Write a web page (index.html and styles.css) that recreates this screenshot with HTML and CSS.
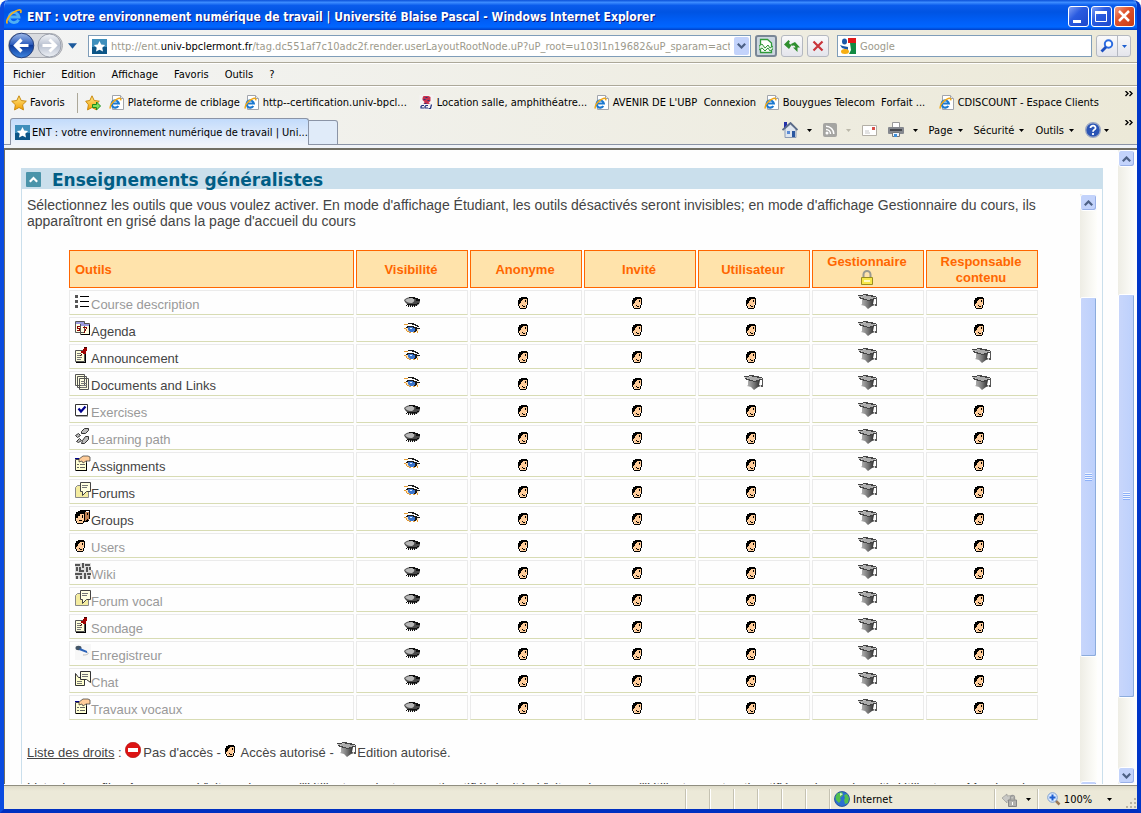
FILE: index.html
```
<!DOCTYPE html>
<html lang="fr">
<head>
    <meta charset="UTF-8">
    <meta name="viewport" content="width=device-width, initial-scale=1.0">
    <title>ENT : votre environnement numérique de travail | Université Blaise Pascal</title>
    <link rel="stylesheet" href="styles.css">
</head>

<body>
    <!-- icon sheet -->
    <svg class="sprites" aria-hidden="true">
        <defs>
            <linearGradient id="gBlue" x1="0" y1="0" x2="0" y2="1">
                <stop offset="0" stop-color="#9db8e8"/><stop offset=".45" stop-color="#2f5fbe"/><stop offset=".5" stop-color="#0d3a9c"/><stop offset="1" stop-color="#3f86e0"/>
            </linearGradient>
            <linearGradient id="gGrey" x1="0" y1="0" x2="0" y2="1">
                <stop offset="0" stop-color="#f4f6fa"/><stop offset=".5" stop-color="#b9c1d0"/><stop offset="1" stop-color="#eef1f6"/>
            </linearGradient>
            <linearGradient id="gStar" x1="0" y1="0" x2="0" y2="1">
                <stop offset="0" stop-color="#ffe98a"/><stop offset="1" stop-color="#f5a000"/>
            </linearGradient>
            <linearGradient id="gCap" x1="0" y1="0" x2="1" y2="0">
                <stop offset="0" stop-color="#b5b5b5"/><stop offset=".5" stop-color="#777"/><stop offset="1" stop-color="#222"/>
            </linearGradient>
        </defs>
        <symbol id="ie" viewBox="0 0 16 16">
            <path d="M12.600 10.600A5 5 0 1 1 13 8H4.500" fill="none" stroke="#4fb0f4" stroke-width="2.800"/>
            <path d="M1.500 14.500C-1 12 4 5 9 2.500s7-2 5.500 1.500" fill="none" stroke="#f2b01e" stroke-width="1.700"/>
        </symbol>
        <symbol id="iepage" viewBox="0 0 16 16">
            <path d="M3.500.500h8l3 3v11h-11z" fill="#fff" stroke="#a0a4ac"/>
            <path d="M11.500.500v3h3" fill="#e4e6ea" stroke="#a0a4ac"/>
            <path d="M9.300 11A3.600 3.600 0 1 1 9.800 8.500H3" fill="none" stroke="#1a78d0" stroke-width="2.200"/>
            <path d="M1.500 13.500C0 11 4 6 7.500 4.300s5-1 4 1" fill="none" stroke="#f0a818" stroke-width="1.500"/>
        </symbol>
        <symbol id="site" viewBox="0 0 15 15">
            <path d="M0 0h15v15H0z" fill="#3f8fbc"/><path d="M0 8h15v7H0z" fill="#0d5687"/>
            <path d="M7.500 2l1.700 3.500 3.900.500-2.800 2.700.700 3.800-3.500-1.800L4 12.500l.700-3.800L1.900 6l3.900-.500z" fill="#fff"/>
        </symbol>
        <symbol id="star" viewBox="0 0 16 16">
            <path d="M8 .800l2.200 4.700 5.100.700-3.700 3.600.900 5.100L8 12.500l-4.500 2.400.900-5.100L.700 6.200l5.100-.700z" fill="url(#gStar)" stroke="#c98a10"/>
        </symbol>
        <symbol id="staradd" viewBox="0 0 16 16">
            <path d="M7 .800l2.200 4.700 5.100.700-3.700 3.600.900 5.100L7 12.500l-4.500 2.400.900-5.100L.700 6.200l4.100-.700z" fill="url(#gStar)" stroke="#c98a10"/>
            <path d="M7.500 9.500h4V7l4 4-4 4v-2.500h-4z" fill="#7de05a" stroke="#1d8a1d"/>
        </symbol>
        <symbol id="cci" viewBox="0 0 14 15">
            <path d="M0 0h14v15H0z" fill="#f5f3f3"/>
            <path d="M4 1h5l2 1v4L9 8l2 1H4l1-2-2-2V3z" fill="#c8324e"/><path d="M6 2h2v1H6zM4 4h2v1H4zM8 5h2v1H8zM5 8h2v1H5z" fill="#29377c"/>
            <path d="M4.500 10.500h-2l-1 1v1.500h3M8.500 10.500h-2l-1 1v1.500h3M12 9.500l-1 4H9" fill="none" stroke="#1f2f7c" stroke-width="1.200"/>
        </symbol>
        <symbol id="nav" viewBox="0 0 56 28">
            <rect x=".5" y="1.500" width="54" height="24" rx="12" fill="#d9dbdf" stroke="#a8aab0"/>
            <circle cx="13.500" cy="13.500" r="12.300" fill="url(#gBlue)" stroke="#27407c"/>
            <circle cx="41.500" cy="13.500" r="11.500" fill="url(#gGrey)" stroke="#9aa0ac"/>
            <path d="M20.500 13.500H8M13.500 7.500l-6 6 6 6" fill="none" stroke="#fff" stroke-width="3.200"/>
            <path d="M34.500 13.500H47M41.500 7.500l6 6-6 6" fill="none" stroke="#fff" stroke-width="3"/>
        </symbol>
        <symbol id="compat" viewBox="0 0 14 16">
            <path d="M1.500 1.500h7l4 3.500v9.500h-11z" fill="#fff" stroke="#2f9a3a" stroke-width="1.300"/>
            <path d="M0 8l3-2 3 4 3-3 2 3 3-2v3l-3 2-2-3-3 3-3-3-3 2z" fill="#e8f4e8" stroke="#2f9a3a"/>
        </symbol>
        <symbol id="refresh" viewBox="0 0 16 14">
            <path d="M0 5.500L4.500 1 6 2.500C4.500 4 5 5.500 8 5.500L5 10 0 5.500z" fill="#2f8f2f"/>
            <path d="M7 5l4-2 5 5.500h-2.500V13L9 8.500h2.500C11 7 10 6 8 7z" fill="#2f8f2f"/>
        </symbol>
        <symbol id="stop" viewBox="0 0 12 12">
            <path d="M1.500 1.500l9 9M10.500 1.500l-9 9" stroke="#c9353b" stroke-width="2.200"/>
        </symbol>
        <symbol id="goog" viewBox="0 0 16 16">
            <path d="M0 0h16v16H0z" fill="#fff"/><path d="M8 0h8v5H8z" fill="#e01818"/><path d="M10 5h6v11H9l2-4z" fill="#118a42"/>
            <ellipse cx="4.500" cy="3.500" rx="2.500" ry="3" fill="#1c57a8"/><path d="M0 7l3 1 5 1v3L2 10z" fill="#1c57a8"/>
            <ellipse cx="5" cy="13.500" rx="4" ry="2.500" fill="#f6ae12"/>
        </symbol>
        <symbol id="loupe" viewBox="0 0 14 14">
            <circle cx="8.500" cy="5" r="3.700" fill="#fff" stroke="#2b6be0" stroke-width="2"/><path d="M6 8l-4.500 4.500" stroke="#1d4fc0" stroke-width="2.800"/>
        </symbol>
        <symbol id="home" viewBox="0 0 16 16">
            <path d="M3 7v8.500h11V7L8.500 2z" fill="#dfe6ee" stroke="#8c9bb4"/>
            <path d="M.500 8L8.500 1l7 7" fill="none" stroke="#5a6b88" stroke-width="1.800"/>
            <path d="M2 0h3v3L2 6z" fill="#2331a8"/><path d="M5 9h3v3H5z" fill="#5b8bd4"/><path d="M10 9h3v6h-3z" fill="#2a57a0"/>
        </symbol>
        <symbol id="rss" viewBox="0 0 14 14">
            <rect width="14" height="14" rx="2" fill="#a5a5a2"/><circle cx="4" cy="10" r="1.500" fill="#fff"/>
            <path d="M3 6.500a4.500 4.500 0 0 1 4.500 4.500M3 3.200a7.800 7.800 0 0 1 7.800 7.800" fill="none" stroke="#fff" stroke-width="1.500"/>
        </symbol>
        <symbol id="mail" viewBox="0 0 15 11">
            <path d="M.500.500h14v10H.500z" fill="#fff" stroke="#b3afa6"/><path d="M3 6h4M3 8h5" stroke="#c6c6c6"/><path d="M10 2h3v3h-3z" fill="#d8504a"/>
        </symbol>
        <symbol id="print" viewBox="0 0 16 16">
            <path d="M4.500.500h7v6h-7z" fill="#fff" stroke="#999"/><rect x="0" y="5" width="16" height="7" rx="1" fill="#85888e"/>
            <path d="M2 7h12v2H2z" fill="#46484e"/><path d="M4.500 10.500h7v4h-7z" fill="#eef5ff" stroke="#777"/><path d="M6 12h3v3H6z" fill="#3e8fd8"/>
        </symbol>
        <symbol id="help" viewBox="0 0 16 16">
            <circle cx="8" cy="8" r="7.300" fill="#2b55b5" stroke="#9aa7c4" stroke-width="1.400"/>
            <path d="M5.500 6C5.500 2.800 11 3 10.500 6.200 10.200 7.700 8 7.800 8 9.800M8 11v2" fill="none" stroke="#fff" stroke-width="1.800"/>
        </symbol>
        <symbol id="caret" viewBox="0 0 5 3"><path d="M0 0h5L2.500 3z" fill="currentColor"/></symbol>
        <symbol id="more" viewBox="0 0 8 6"><path d="M.500 0l2.500 2.500L.500 5M4.500 0L7 2.500 4.500 5" fill="none" stroke="#000" stroke-width="1.400"/></symbol>
        <symbol id="chevup" viewBox="0 0 9 6"><path d="M.800 5.200L4.500 1.500l3.700 3.700" fill="none" stroke="currentColor" stroke-width="2.200"/></symbol>
        <symbol id="chevdown" viewBox="0 0 9 6"><path d="M.800.800l3.700 3.700L8.200.800" fill="none" stroke="currentColor" stroke-width="2.200"/></symbol>
        <symbol id="globe" viewBox="0 0 16 16">
            <circle cx="8" cy="8" r="7.500" fill="#2c6fd0" stroke="#1d4a90" stroke-width=".8"/>
            <path d="M3 2.500L8 1l1 3-3 3 1 2-2 3-3-3-.500-3zM10 4l3-1 2 4-1 5-3 1-1-4 1-2z" fill="#52c04e"/><path d="M6 2l3 1-3 2z" fill="#d7f3d2"/>
        </symbol>
        <symbol id="secure" viewBox="0 0 16 15">
            <path d="M0 6l5-4v2c5-1 7 1 7 3H8L5 9v2z" fill="#c9c9c6" stroke="#9b9b98" stroke-width=".7"/>
            <path d="M6.500 8h8v6.500h-8z" fill="#b1b1ae" stroke="#888"/><path d="M8.500 8V5.500a2 2 0 0 1 4 0V8" fill="none" stroke="#999" stroke-width="1.300"/><path d="M10 10h1v3h-1z" fill="#fff"/>
        </symbol>
        <symbol id="zoom" viewBox="0 0 14 14">
            <path d="M8.500 8.500l4 4" stroke="#9b7a5a" stroke-width="2.500"/><circle cx="5.500" cy="5.500" r="4.800" fill="#dbeaff" stroke="#7d9fcf"/>
            <path d="M5.500 2.500v6M2.500 5.500h6" stroke="#1f5fd0" stroke-width="2"/>
        </symbol>

        <!-- course tool icons -->
        <symbol id="face" viewBox="0 0 16 16">
            <path d="M3 5h6v6H8v4H3l-2-3V8z" fill="#fc9"/>
            <path d="M3 4h6v1H3zM1 5h9v1H1zM1 6h4v1H1zM0 7h4v1H0zM0 8h3v2H0zM0 10h2v1H0zM0 11h1v2H0zM1 13h1v2H1zM2 15h6v1H2zM8 12h1v3H8zM9 6h1v6H9zM7 7h1v2H7zM4 12h1v1H4zM5 13h2v1H5z"/>
        </symbol>
        <symbol id="shut" viewBox="0 0 16 16">
            <path d="M0 7c3-3 8-4 12-2l4 3c0 3-3 5-6 5-4 0-8-1-10-6z" fill="#4a4a4a"/>
            <path d="M1 7c3-2 7-3 9-1 1 2-1 4-3 4-3 0-5-1-6-3z" fill="#b8b8b8"/>
            <path d="M5 4h6v1H5zM9 5h5v1H9zM12 6h4v2h-4zM3 11h10v1H3zM2 12h1v1H2zM4 12h1v2H4zM6 12h1v2H6zM8 12h1v2H8zM10 12h1v2h-1zM12 12h1v1h-1zM13 10h2v1h-2z" fill="#111"/>
        </symbol>
        <symbol id="eye" viewBox="0 0 16 16">
            <path d="M1 9l4-2h7l3 3-2 2H4z" fill="#fbe2bc"/>
            <path d="M4 7h7v4l-2 1H6l-2-2z" fill="#3a74cc"/><path d="M6 8h2v1H6z" fill="#d5e8fb"/>
            <path d="M0 4h4v1H0zM0 8h2v1H0zM2 9h1v2H2zM3 11h2v1H3zM5 12h2v1H5zM9 12h2v1H9zM13 11h1v2h-1z" fill="#e59a30"/>
            <path d="M4 3h6v1H4zM8 4h4v1H8zM11 5h3v1h-3zM13 6h2v1h-2zM3 6h7v1H3zM2 7h2v1H2zM9 7h4v1H9zM11 8h5v1h-5zM11 9h2v2h-2zM10 11h2v1h-2z" fill="#1a1a1a"/>
        </symbol>
        <symbol id="cap" viewBox="0 0 20 16">
            <path d="M4 6h12l-1 5 2 1-3 1-4 3-3-3-4-1 1-1z" fill="url(#gCap)"/>
            <path d="M0 3l9-1 9 2-7 4z" fill="#ababab"/>
            <path d="M5 1h5v1h5v1h3v1h-5V3H8V2H5zM0 2h5v1H0zM1 4h2v1h3v1h3v1h3V6h3V5h3v1h-2v1h-3v1H9V7H5V6H2V5H1z" fill="#444"/>
            <path d="M18 4h1v7h-1zM17 11h2v2h-2z" fill="#555"/>
        </symbol>
        <symbol id="list" viewBox="0 0 16 16">
            <path d="M0 2h3v3H0zM0 7h3v3H0zM0 12h3v3H0z" fill="#555"/><path d="M5 3h9v1H5zM5 8h9v1H5zM5 13h9v1H5z"/>
        </symbol>
        <symbol id="agenda" viewBox="0 0 16 16">
            <path d="M.500 1.500h9v11h-9zM5.500 3.500h9v11h-9z" fill="#ffffe1" stroke="#555"/><path d="M1 2h8v2H1zM6 4h8v2H6z" fill="#9a9ae0"/>
            <path d="M2 6h3v1H3v1h2v3H2v-1h2V9H2zM8 7h4v2h-1v2h-1v2H9v-2h1V9h1V8H8z" fill="#8b0000"/><path d="M14 5h1v10H6v-1h8z"/>
        </symbol>
        <symbol id="note" viewBox="0 0 16 16">
            <path d="M.500 3.500h9v11h-9z" fill="#ffffdc" stroke="#555"/><path d="M10 6v9H1v1h10V6z"/><path d="M2 6h4v1H2zM2 8h5v1H2zM2 10h5v1H2zM2 12h4v1H2z" fill="#777"/>
            <path d="M8 2h1V1h3v3h-1v3H8V6H6V4h2z" fill="#a00000"/><path d="M5 8h1V7h1v1H6v1H5zM9 0h3v1H9z" fill="#400"/>
        </symbol>
        <symbol id="docs" viewBox="0 0 16 16">
            <path d="M.500.500h9v11h-9zM2.500 2.500h9v11h-9zM4.500 4.500h9v11h-9z" fill="#ffffe1" stroke="#555"/><path d="M6 7h4v1H6zM6 9h6v1H6zM6 11h6v1H6zM6 13h6v1H6z" fill="#777"/>
        </symbol>
        <symbol id="check" viewBox="0 0 16 16">
            <path d="M.500 3.500h12v11H.500z" fill="#fff" stroke="#333"/><path d="M3.500 7.500l2.500 3 4.500-5" fill="none" stroke="#00008b" stroke-width="2.200"/><path d="M1 15h12v1H1z" fill="#aaa"/>
        </symbol>
        <symbol id="path" viewBox="0 0 16 16">
            <path d="M6.500 3.500l3-3h4v2l-3 3h-4zM7.500 12.500l3-4h3v3l-4 4h-3zM.500 7.500l3-2 2 2-3 2zM1.500 13.500l3-3 2 2-3 2z" fill="#bbb" stroke="#333"/>
        </symbol>
        <symbol id="work" viewBox="0 0 16 16">
            <path d="M.500 4.500h11v11H.500z" fill="#ffffd4" stroke="#444"/><path d="M2 9h2v1H2zM5 9h5v1H5zM2 12h2v1H2zM5 12h5v1H5z" fill="#666"/>
            <path d="M4 4l4-3h5l2 1v4h-4L8 8 7 6 4 7z" fill="#fc9" stroke="#333" stroke-width=".7"/><path d="M0 3h4v1H0z" fill="#00008b"/><path d="M12 8v8H1v-1h10V8z"/>
        </symbol>
        <symbol id="forum" viewBox="0 0 16 16">
            <path d="M.500 5.500l2-2h5v3h6v9H.500z" fill="#f4eca0" stroke="#888"/><path d="M5.500.500h10v9h-4l-4 4v-4h-2z" fill="#ffffe1" stroke="#444"/><path d="M7 3h6v1H7zM7 5h5v1H7z" fill="#777"/>
        </symbol>
        <symbol id="groups" viewBox="0 0 16 16">
            <path d="M7 3h7v8h-2v2H7z" fill="#c08050"/><path d="M3 4h6v10H3L1 11z" fill="#fc9"/>
            <path d="M5 1h10v1H5zM8 2h3v1H8zM14 2h1v8h-1zM12 4h1v2h-1zM11 11h3v1h-3zM12 10h1v3H9v-1h3zM3 2h6v1H3zM1 3h9v2H1zM0 5h5v2H0zM0 7h3v2H0zM0 9h1v3H0zM1 12h1v2H1zM2 14h6v1H2zM8 12h1v2H8zM9 5h1v7H9zM7 6h1v3H7zM4 11h3v1H4z"/>
        </symbol>
        <symbol id="wiki" viewBox="0 0 16 16">
            <path d="M0 0h16v16H0z" fill="#ddd"/>
            <path d="M0 1h5v2H0zM1 4h2v4H1zM4 4h2v3h3v2H4zM7 0h2v5H7zM10 1h5v2h-5zM11 4h2v5h-2zM14 4h2v3h-2zM0 10h7v2H0zM9 10h2v6H9zM12 10h4v2h-4zM1 13h2v3H1zM5 13h2v3H5zM13 13h2v3h-2z" fill="#555"/>
        </symbol>
        <symbol id="micro" viewBox="0 0 16 16">
            <path d="M0 0h16v16H0z" fill="#f7f7f7"/><ellipse cx="3.500" cy="4" rx="3" ry="2.200" fill="#456"/><path d="M5 4l7 3v2L4 6z" fill="#2a62b8"/><path d="M12 8c2 1 2 3-4 3" fill="none" stroke="#bbb"/>
        </symbol>
        <symbol id="chat" viewBox="0 0 16 16">
            <path d="M.500 2.500l3 4h6v8h-9z" fill="#ffffcf" stroke="#333"/><path d="M5.500.500h10v11l-4-3h-6z" fill="#ffffe1" stroke="#333"/><path d="M7 3h6v1H7zM7 5h6v1H7zM2 10h5v1H2zM2 12h5v1H2z" fill="#777"/>
        </symbol>
        <symbol id="lock" viewBox="0 0 14 16">
            <path d="M3.500 7V4.500a3.500 3.500 0 0 1 7 0V7" fill="none" stroke="#9a9a90" stroke-width="2"/><path d="M1.500 7.500h11v7h-11z" fill="#f7e84a" stroke="#9a8c20"/><path d="M4 10h6v2H4z" fill="#fffbc0"/>
        </symbol>
        <symbol id="denied" viewBox="0 0 16 16">
            <circle cx="8" cy="8" r="7.700" fill="#dc1414" stroke="#b00808" stroke-width=".6"/><path d="M3 6h10v4H3z" fill="#fff"/>
        </symbol>
    </svg>

    <div class="window">
        <header class="titlebar">
            <svg class="ic16"><use href="#ie"/></svg>
            <h1>ENT : votre environnement numérique de travail | Université Blaise Pascal - Windows Internet Explorer</h1>
            <button class="wbtn" aria-label="Réduire"><svg viewBox="0 0 21 21"><path d="M5 14h8v3H5z" fill="#fff"/></svg></button>
            <button class="wbtn" aria-label="Agrandir"><svg viewBox="0 0 21 21"><path d="M4.500 5.500h11v10h-11z" fill="none" stroke="#fff"/><path d="M4 5h12v3H4z" fill="#fff"/></svg></button>
            <button class="wbtn close" aria-label="Fermer"><svg viewBox="0 0 21 21"><path d="M5 5l10 10M15 5L5 15" stroke="#fff" stroke-width="2.500"/></svg></button>
        </header>

        <div class="chrome">
            <div class="navrow">
                <svg class="navbtns"><use href="#nav"/></svg>
                <svg class="navcaret"><use href="#caret"/></svg>
                <div class="address">
                    <svg class="ic15"><use href="#site"/></svg>
                    <div class="url">http://ent.<b>univ-bpclermont.fr</b>/tag.dc551af7c10adc2f.render.userLayoutRootNode.uP?uP_root=u103l1n19682&amp;uP_sparam=activ</div>
                    <button class="drop" aria-label="Historique"><svg class="chev"><use href="#chevdown"/></svg></button>
                </div>
                <button class="tool on" aria-label="Affichage de compatibilité"><svg width="14" height="16"><use href="#compat"/></svg></button>
                <button class="tool" aria-label="Actualiser"><svg width="16" height="14"><use href="#refresh"/></svg></button>
                <button class="tool" aria-label="Arrêter"><svg width="12" height="12"><use href="#stop"/></svg></button>
                <div class="search">
                    <svg class="ic16"><use href="#goog"/></svg>
                    <input type="text" placeholder="Google" aria-label="Recherche">
                </div>
                <div class="searchbtns">
                    <button aria-label="Rechercher"><svg width="14" height="14"><use href="#loupe"/></svg></button>
                    <button class="thin" aria-label="Options de recherche"><svg class="caret"><use href="#caret"/></svg></button>
                </div>
            </div>

            <nav class="menu">
                <a href="#">Fichier</a>
                <a href="#">Edition</a>
                <a href="#">Affichage</a>
                <a href="#">Favoris</a>
                <a href="#">Outils</a>
                <a href="#">?</a>
            </nav>

            <div class="favs">
                <button class="favbtn"><svg class="ic16"><use href="#star"/></svg>Favoris</button>
                <div class="links">
                    <svg class="ic16"><use href="#staradd"/></svg>
                    <a href="#" class="f1"><svg class="ic16"><use href="#iepage"/></svg>Plateforme de criblage</a>
                    <a href="#" class="f2"><svg class="ic16"><use href="#iepage"/></svg>http--certification.univ-bpcl...</a>
                    <a href="#" class="f2"><svg class="ic15"><use href="#cci"/></svg>Location salle, amphithéatre...</a>
                    <a href="#" class="f3"><svg class="ic16"><use href="#iepage"/></svg>AVENIR DE L'UBP</a>
                    <a href="#" class="f4">Connexion</a>
                    <a href="#" class="f2"><svg class="ic16"><use href="#iepage"/></svg>Bouygues Telecom&nbsp; Forfait ...</a>
                    <a href="#"><svg class="ic16"><use href="#iepage"/></svg>CDISCOUNT - Espace Clients</a>
                </div>
                <svg class="more"><use href="#more"/></svg>
            </div>

            <div class="tabrow">
                <a href="#" class="tab"><svg class="ic15"><use href="#site"/></svg>ENT : votre environnement numérique de travail | Uni...</a>
                <button class="newtab" aria-label="Nouvel onglet"></button>
                <div class="commands">
                    <button class="split" aria-label="Accueil"><svg class="ic16"><use href="#home"/></svg><svg class="caret"><use href="#caret"/></svg></button>
                    <button class="split off" aria-label="Flux"><svg width="14" height="14"><use href="#rss"/></svg><svg class="caret"><use href="#caret"/></svg></button>
                    <button aria-label="Courrier"><svg width="15" height="11"><use href="#mail"/></svg></button>
                    <button class="split" aria-label="Imprimer"><svg class="ic16"><use href="#print"/></svg><svg class="caret"><use href="#caret"/></svg></button>
                    <button>Page<svg class="caret"><use href="#caret"/></svg></button>
                    <button>Sécurité<svg class="caret"><use href="#caret"/></svg></button>
                    <button>Outils<svg class="caret"><use href="#caret"/></svg></button>
                    <button class="help" aria-label="Aide"><svg class="ic16"><use href="#help"/></svg><svg class="caret"><use href="#caret"/></svg></button>
                </div>
                <svg class="more"><use href="#more"/></svg>
            </div>
        </div>

        <main class="page">
            <div class="document">
                <section class="portlet">
                    <h2><svg class="fold"><use href="#chevup"/></svg>Enseignements généralistes</h2>
                    <div class="frame">
                        <div class="content">
                            <p class="intro">Sélectionnez les outils que vous voulez activer. En mode d'affichage Étudiant, les outils désactivés seront invisibles; en mode d'affichage Gestionnaire du cours, ils apparaîtront en grisé dans la page d'accueil du cours</p>
                            <table class="rights">
                                <colgroup><col class="name"><col span="6"></colgroup>
                                <thead>
                                    <tr>
                                        <th class="name">Outils</th>
                                        <th>Visibilité</th>
                                        <th>Anonyme</th>
                                        <th>Invité</th>
                                        <th>Utilisateur</th>
                                        <th>Gestionnaire<br><svg class="lock"><use href="#lock"/></svg></th>
                                        <th>Responsable contenu</th>
                                    </tr>
                                </thead>
                                <tbody id="tools"></tbody>
                            </table>
                            <p class="legend"><u>Liste des droits</u> : <svg class="ic16 denied"><use href="#denied"/></svg>Pas d'accès - <svg class="ic16"><use href="#face"/></svg>Accès autorisé - <svg class="cap"><use href="#cap"/></svg>Edition autorisé.</p>
                            <p class="legend profiles">Liste des profils : Anonyme = Visiteur du cours (l'Utilisateur n'est pas authentifié), Invité : Visiteur du cours (l'Utilisateur est authentifié, mais pas inscrit), Utilisateur : Membre du cours</p>
                        </div>
                        <div class="scroll inner">
                            <button aria-label="Monter"><svg class="chev"><use href="#chevup"/></svg></button>
                            <span class="before"></span><span class="thumb"><i></i></span><span class="after"></span>
                            <button aria-label="Descendre"><svg class="chev"><use href="#chevdown"/></svg></button>
                        </div>
                    </div>
                </section>
            </div>
            <div class="scroll outer">
                <button aria-label="Monter"><svg class="chev"><use href="#chevup"/></svg></button>
                <span class="before"></span><span class="thumb"><i></i></span><span class="after"></span>
                <button aria-label="Descendre"><svg class="chev"><use href="#chevdown"/></svg></button>
            </div>
        </main>

        <footer class="status">
            <span class="cell"></span><span class="cell"></span><span class="cell"></span><span class="cell"></span><span class="cell"></span><span class="cell"></span>
            <span class="zone"><svg class="ic16"><use href="#globe"/></svg>Internet</span>
            <button class="protect" aria-label="Mode protégé"><svg width="16" height="15"><use href="#secure"/></svg><svg class="caret"><use href="#caret"/></svg></button>
            <button class="zoom"><svg width="14" height="14"><use href="#zoom"/></svg>100%<svg class="caret"><use href="#caret"/></svg></button>
            <svg class="grip" viewBox="0 0 12 12"><path d="M9 1h2v2H9zM5 5h2v2H5zM9 5h2v2H9zM1 9h2v2H1zM5 9h2v2H5zM9 9h2v2H9z" fill="#b8b4a2"/></svg>
        </footer>
    </div>

    <script>
        // icon, name, visible, then user and content manager rights
        const tools = [
            ['list', 'Course description', false, 'face', 'face'],
            ['agenda', 'Agenda', true, 'face', 'face'],
            ['note', 'Announcement', true, 'face', 'cap'],
            ['docs', 'Documents and Links', true, 'cap', 'cap'],
            ['check', 'Exercises', false, 'face', 'face'],
            ['path', 'Learning path', false, 'face', 'face'],
            ['work', 'Assignments', true, 'face', 'face'],
            ['forum', 'Forums', true, 'face', 'face'],
            ['groups', 'Groups', true, 'face', 'face'],
            ['face', 'Users', false, 'face', 'face'],
            ['wiki', 'Wiki', false, 'face', 'face'],
            ['forum', 'Forum vocal', false, 'face', 'face'],
            ['note', 'Sondage', false, 'face', 'face'],
            ['micro', 'Enregistreur', false, 'face', 'face'],
            ['chat', 'Chat', false, 'face', 'face'],
            ['work', 'Travaux vocaux', false, 'face', 'face']
        ];

        const icon = name => `<svg class="${name === 'cap' ? 'cap' : 'ic16'}"><use href="#${name}"/></svg>`;

        document.getElementById('tools').innerHTML = tools.map(([img, name, visible, user, content]) => `
            <tr>
                <td class="name"><a href="#"${visible ? '' : ' class="hidden"'}>${icon(img)}${name}</a></td>
                <td>${icon(visible ? 'eye' : 'shut')}</td>
                <td>${icon('face')}</td>
                <td>${icon('face')}</td>
                <td>${icon(user)}</td>
                <td>${icon('cap')}</td>
                <td>${icon(content)}</td>
            </tr>`).join('');
    </script>
</body>
</html>
```
FILE: styles.css
```
* {
    box-sizing: border-box;
}

body {
    margin: 0;
    font-family: "DejaVu Sans Condensed", "DejaVu Sans", sans-serif;
    font-size: 11px;
    color: #000;
}

a {
    color: inherit;
    text-decoration: none;
}

button {
    margin: 0;
    padding: 0;
    border: none;
    background: none;
    font: inherit;
    color: inherit;
    display: flex;
    align-items: center;
    justify-content: center;
}

svg {
    flex: none;
}

.sprites {
    position: absolute;
    width: 0;
    height: 0;
}

.ic16 {
    width: 16px;
    height: 16px;
}

.ic15 {
    width: 15px;
    height: 15px;
}

.cap {
    width: 20px;
    height: 16px;
}

.caret {
    width: 5px;
    height: 3px;
}

.chev {
    width: 9px;
    height: 6px;
    color: #4d6185;
}

.more {
    width: 8px;
    height: 6px;
    align-self: flex-start;
    margin-top: 4px;
    margin-left: auto;
}

.window {
    height: 100vh;
    display: flex;
    flex-direction: column;
    overflow: hidden;
    border: solid #0a4be0;
    border-width: 0 4px 4px;
    border-right-color: #0036c8;
    border-bottom-color: #0030c0;
    border-radius: 8px 8px 0 0;
}

/* title bar */
.titlebar {
    flex: none;
    height: 30px;
    margin: 0 -4px;
    padding: 3px 6px 0;
    display: flex;
    align-items: center;
    gap: 2px;
    background: linear-gradient(#0a50d8, #3c8cff 8%, #0a5cec 18%, #0054e3 40%, #0060fa 75%, #0066ff 90%, #0040c8);
}

.titlebar h1 {
    flex: 1;
    margin: 0 0 0 3px;
    overflow: hidden;
    white-space: nowrap;
    font-size: 12px;
    font-weight: bold;
    color: #fff;
    text-shadow: 1px 1px #0a1883;
}

.wbtn {
    width: 21px;
    height: 21px;
    border: 1px solid #fff;
    border-radius: 3px;
    background: linear-gradient(135deg, #7f9ff5, #2a5be0 40%, #1c48cc);
}

.wbtn svg {
    width: 21px;
    height: 21px;
}

.close {
    background: linear-gradient(135deg, #f0a088, #e0532c 40%, #c83c14);
}

/* toolbars */
.chrome {
    flex: none;
    background: linear-gradient(90deg, #f3f4f4, #ece9d8);
}

.navrow {
    height: 33px;
    padding: 0 6px 0 4px;
    display: flex;
    align-items: center;
    gap: 4px;
    border-bottom: 1px solid #aca899;
}

.navbtns {
    width: 56px;
    height: 28px;
}

.navcaret {
    width: 9px;
    height: 6px;
    color: #1c5a9c;
}

.address,
.search {
    height: 22px;
    display: flex;
    align-items: center;
    padding: 0 0 0 3px;
    gap: 4px;
    border: 1px solid #7f9db9;
    background: #fff;
    color: #9c9a8c;
}

.address {
    flex: 1;
    min-width: 0;
    margin-left: 7px;
}

.url {
    flex: 1;
    overflow: hidden;
    white-space: nowrap;
}

.url b {
    font-weight: normal;
    color: #000;
}

.drop {
    width: 15px;
    height: 18px;
    margin-right: 1px;
    background: #c3d3fb;
    border-radius: 2px;
}

.tool {
    width: 22px;
    height: 22px;
    border: 1px solid #b4b8c0;
    border-radius: 3px;
    background: linear-gradient(#fafafa, #e4e5ec);
}

.tool.on {
    border: 2px solid #7a8796;
    background: #ccd6e0;
}

.search {
    width: 255px;
    margin-left: 4px;
    padding-left: 2px;
}

.search input {
    flex: 1;
    min-width: 0;
    padding: 0;
    border: none;
    outline: none;
    background: none;
    font: inherit;
}

.search input::placeholder {
    color: #9c9a8c;
}

.searchbtns {
    display: flex;
    border: 1px solid #b4b8c0;
    border-radius: 3px;
    background: linear-gradient(#fafafa, #e4e5ec);
}

.searchbtns button {
    width: 20px;
    height: 20px;
    color: #1d5fd0;
}

.searchbtns .thin {
    width: 13px;
    border-left: 1px solid #b4b8c0;
}

.menu {
    height: 23px;
    padding-left: 9px;
    display: flex;
    align-items: center;
    gap: 16px;
    border-top: 1px solid #fff;
    border-bottom: 1px solid #aca899;
}

.favs {
    height: 32px;
    padding: 0 4px 0 7px;
    display: flex;
    align-items: center;
    border-top: 1px solid #fff;
}

.favbtn {
    gap: 3px;
}

.links {
    height: 20px;
    margin-left: 12px;
    padding-left: 7px;
    display: flex;
    align-items: center;
    border-left: 1px solid #aca899;
}

.links a {
    display: flex;
    align-items: center;
    gap: 3px;
    white-space: nowrap;
}

.links .f1 {
    width: 135px;
    margin-left: 8px;
}

.links .f2 {
    width: 175px;
}

.links .f3 {
    width: 110px;
}

.links .f4 {
    width: 60px;
}

.tabrow {
    height: 31px;
    padding: 0 4px 0 6px;
    display: flex;
    align-items: flex-start;
    border-bottom: 1px solid #716f64;
    background: linear-gradient(transparent 26px, #8b94a6 26px, #8b94a6 27px, #f0f3f8 27px);
}

.tab {
    width: 299px;
    height: 27px;
    padding: 0 0 0 4px;
    display: flex;
    align-items: center;
    gap: 2px;
    white-space: nowrap;
    border: 1px solid #8b94a6;
    border-bottom: none;
    border-radius: 3px 3px 0 0;
    background: linear-gradient(#c2dbfb, #f0f4fb);
}

.newtab {
    width: 29px;
    height: 25px;
    margin-top: 2px;
    border: 1px solid #8b94a6;
    border-left: none;
    border-radius: 0 3px 0 0;
    background: #e0ebf9;
}

.commands {
    height: 24px;
    margin-left: auto;
    display: flex;
    align-items: center;
    gap: 11px;
}

.commands button {
    gap: 5px;
}

.commands .split {
    gap: 9px;
}

.commands .off {
    color: #bbb8aa;
}

.commands .help {
    gap: 3px;
}

.tabrow .more {
    margin-top: 2px;
    margin-left: 16px;
}

/* page */
.page {
    flex: 1;
    min-height: 0;
    display: flex;
    overflow: hidden;
    border-top: 1px solid #716f64;
    border-left: 1px solid #716f64;
    background: #fefefe;
}

.document {
    flex: 1;
    padding: 18px 15px 0 16px;
    overflow: hidden;
}

.portlet h2 {
    height: 21px;
    margin: 0;
    padding: 2px 0 0 5px;
    display: flex;
    align-items: center;
    gap: 11px;
    background: #cadfec;
    font-family: "DejaVu Sans", sans-serif;
    font-size: 17px;
    line-height: 20px;
    color: #005d85;
}

.fold {
    width: 15px;
    height: 15px;
    padding: 3px;
    border-radius: 1px;
    background: #4b94aa;
    color: #fff;
}

.frame {
    display: flex;
    padding: 5px 5px 0 5px;
    border: solid #cadfec;
    border-width: 0 1px;
}

.content {
    flex: 1;
    min-width: 0;
    font-family: "Liberation Sans", Arial, sans-serif;
    font-size: 13px;
    color: #444;
}

.intro {
    margin: 3px 0 19px;
    font-size: 14px;
    line-height: 16px;
}

.rights {
    width: calc(100% - 80px);
    margin: 0 40px;
    table-layout: fixed;
    border-spacing: 2px;
}

.rights th,
.rights td {
    text-align: center;
}

.rights col {
    width: 112px;
}

.rights col.name {
    width: auto;
}

.rights th {
    height: 38px;
    padding: 3px 6px 1px 4px;
    border: 1px solid #f60;
    background: #ffe3ab;
    line-height: 16px;
    color: #f60;
}

.lock {
    width: 14px;
    height: 16px;
    vertical-align: top;
}

.rights td {
    height: 25px;
    padding: 2px 5px 1px;
    border: 1px solid #ebebeb;
    border-bottom-color: #d8dcb4;
    line-height: 17px;
}

.rights .name {
    padding-left: 5px;
    text-align: left;
}

.hidden {
    color: #999;
}

.legend {
    margin: 19px 0 0;
    line-height: 20px;
}

.legend .denied {
    margin-right: 2px;
    vertical-align: -1px;
}

.profiles {
    margin-top: 15px;
    white-space: nowrap;
}

/* scroll bars */
.scroll {
    flex: none;
    width: 17px;
    display: flex;
    flex-direction: column;
    background: linear-gradient(90deg, #eeede5, #fefefb);
}

.scroll button {
    flex: none;
    height: 17px;
    border: 1px solid #fff;
    border-radius: 3px;
    background: #c3d3fb;
    box-shadow: inset -1px -1px #98b0e8;
}

.thumb {
    display: flex;
    align-items: center;
    justify-content: center;
    border: 1px solid #fff;
    border-radius: 2px;
    background: linear-gradient(90deg, #c8d6fb, #bcd0fc);
    box-shadow: inset -1px -1px #8cacdc;
}

.thumb i {
    width: 7px;
    height: 8px;
    background: repeating-linear-gradient(#eef4fe 0, #eef4fe 1px, #8cb0f8 1px, #8cb0f8 2px);
}

.inner .before {
    flex: 86;
}

.inner .thumb {
    flex: 357;
}

.inner .after {
    flex: 124;
}

.outer {
    margin-right: 2px;
}

.outer .before {
    flex: 127;
}

.outer .thumb {
    flex: 404;
}

.outer .after {
    flex: 69;
}

/* status bar */
.status {
    flex: none;
    height: 25px;
    padding-top: 4px;
    display: flex;
    justify-content: flex-end;
    align-items: stretch;
    border-top: 1px solid #fff;
    background: linear-gradient(#908e80 1px, #dedbc9 1px, #ece9d8 6px);
}

.status > span,
.status > button {
    padding: 0 4px;
    display: flex;
    align-items: center;
    gap: 3px;
    border-left: 1px solid #c5c2b2;
    box-shadow: inset 1px 0 #fff;
}

.cell {
    width: 24px;
}

.zone {
    width: 165px;
}

.status > .protect {
    width: 43px;
    gap: 8px;
}

.status > .zoom {
    width: 84px;
    gap: 3px;
}

.zoom .caret {
    margin-left: 12px;
}

.grip {
    width: 12px;
    height: 12px;
    margin-left: 4px;
    align-self: flex-end;
}
```
